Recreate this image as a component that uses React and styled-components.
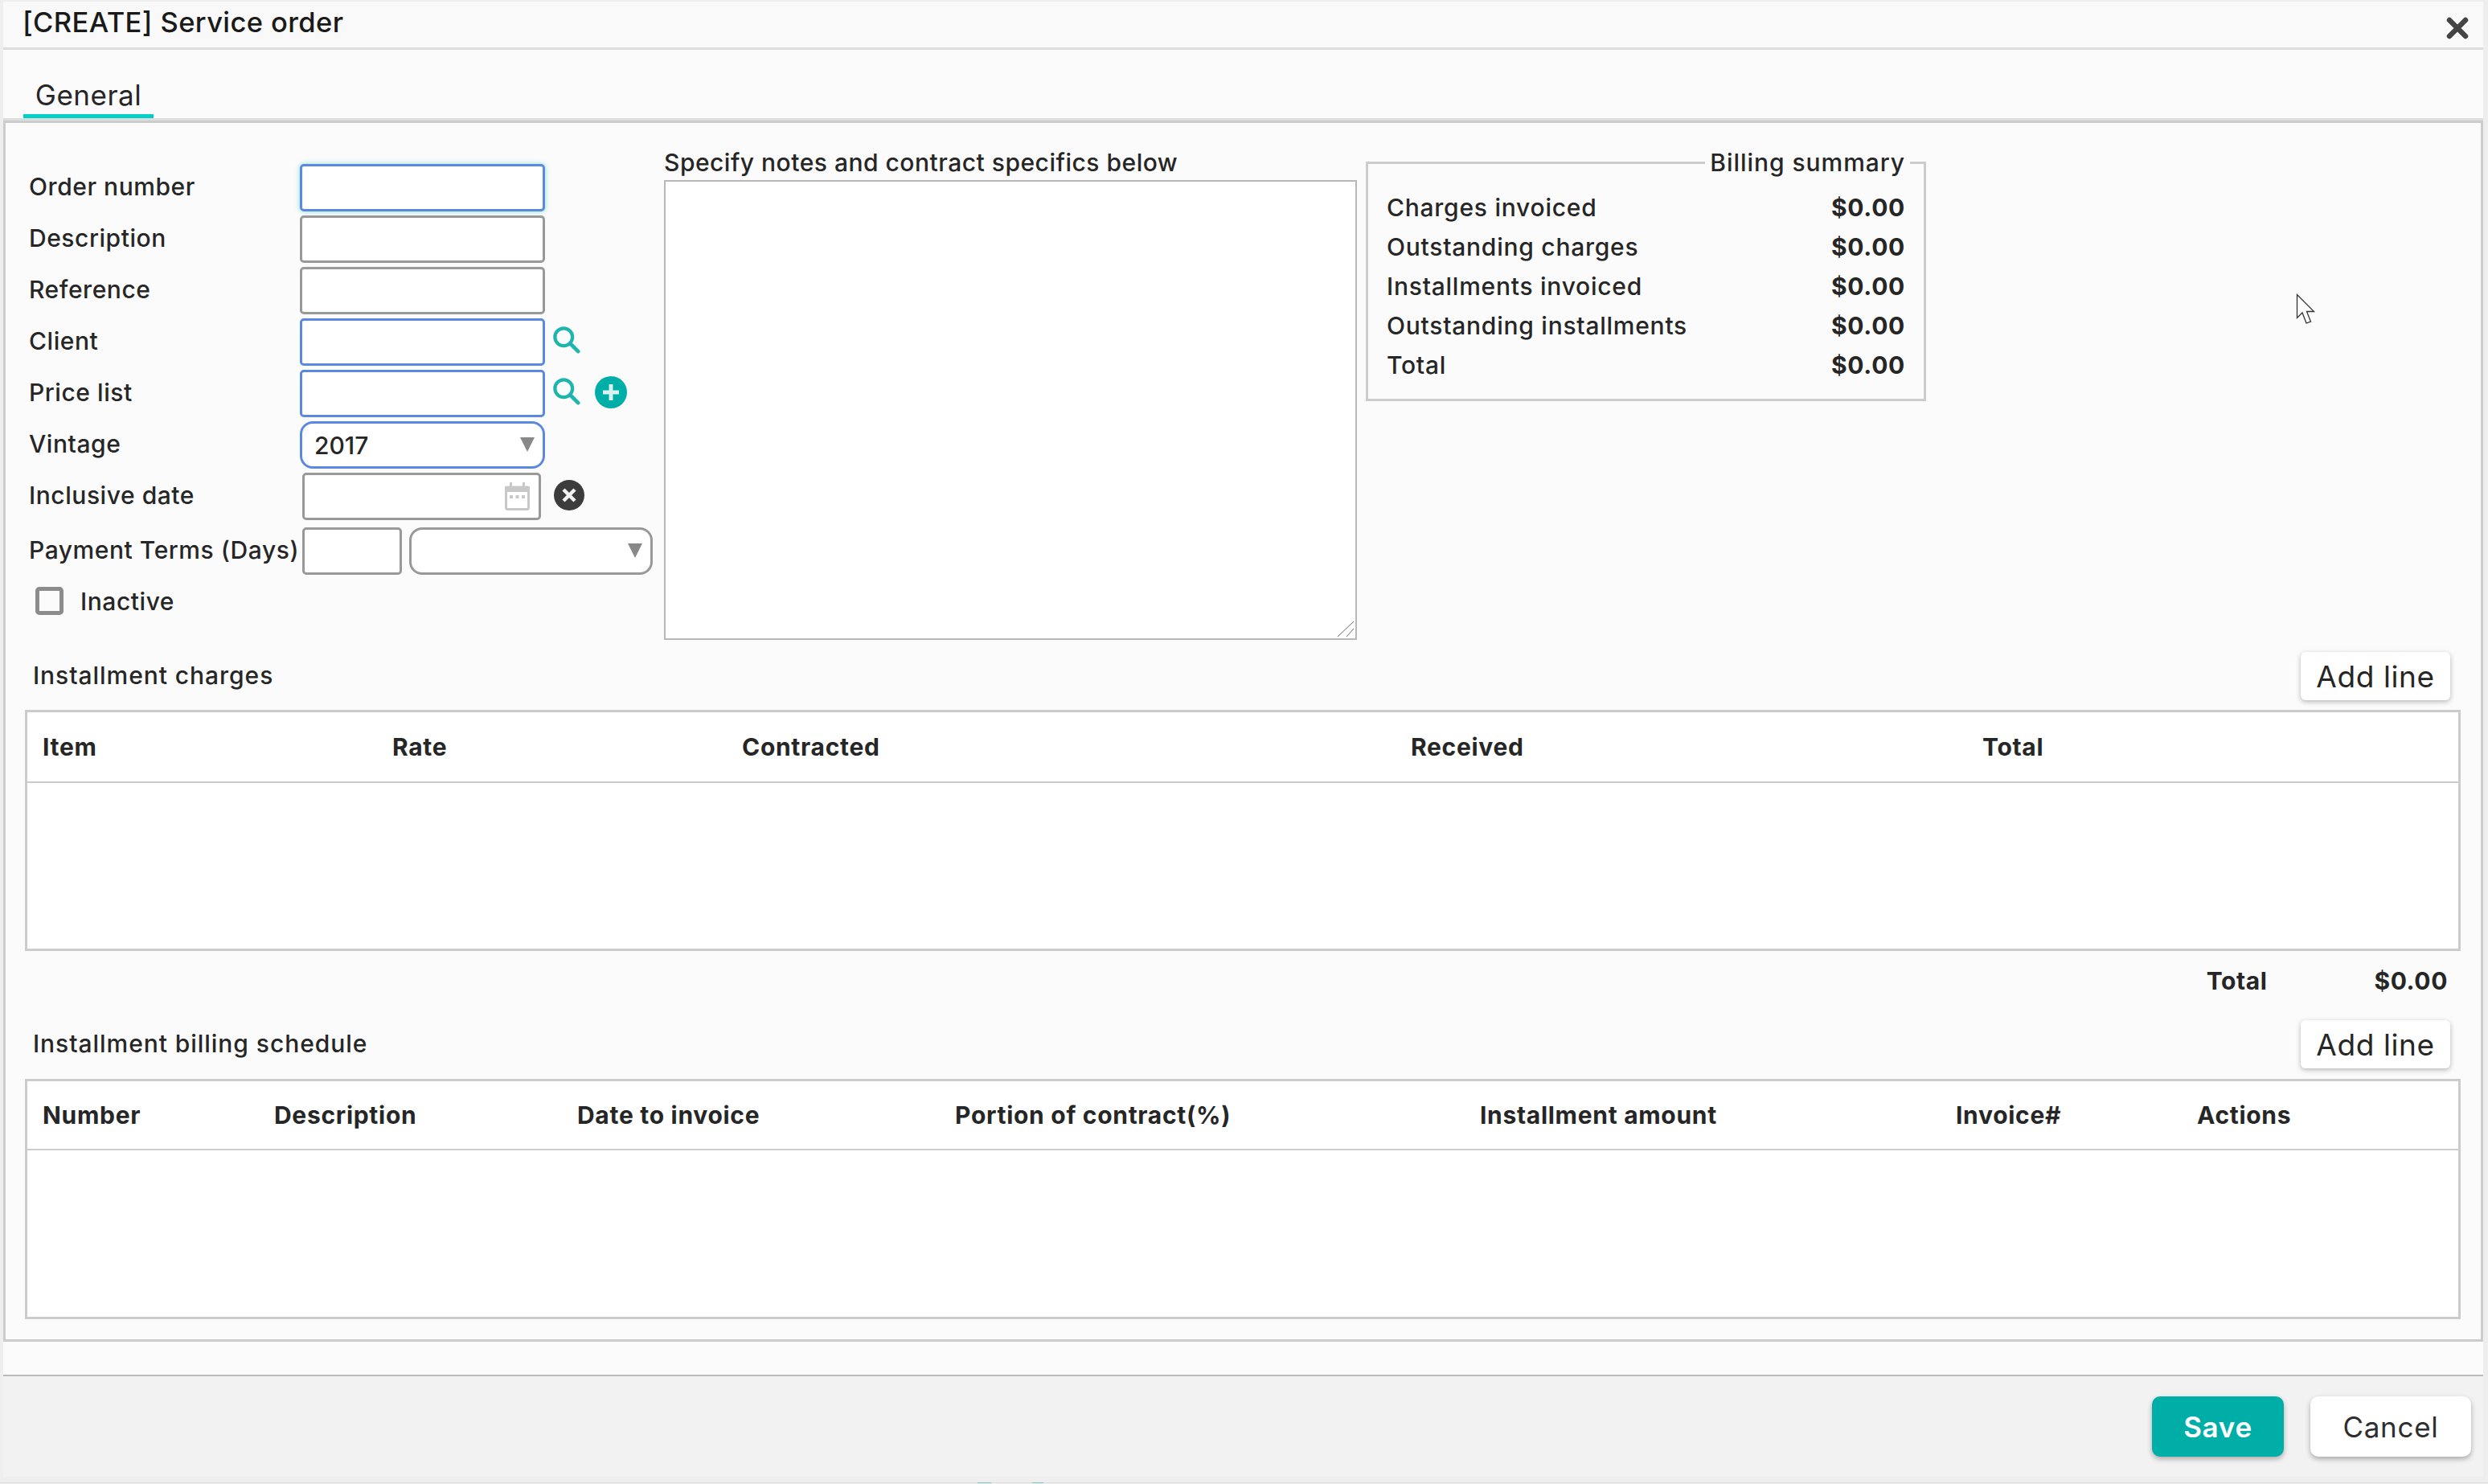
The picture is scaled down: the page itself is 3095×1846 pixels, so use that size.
import styled, { createGlobalStyle } from 'styled-components'

const Global = createGlobalStyle`
html, body {
  margin: 0;
  padding: 0;
  background: #eeeeee;
}
* {
  box-sizing: border-box;
}
body {
  font-family: Inter, "Noto Sans", sans-serif;
  color: #262626;
}
`

const color = {
  teal: '#00aea8',
  tab: '#00d0c8',
  focus: '#5b88e0',
  gray: '#999999',
  line: '#cccccc',
}

const Page = styled.div`
position: relative;
width: 3095px;
height: 1846px;
overflow: hidden;
display: flex;
flex-direction: column;
padding-top: 2px;
background: #eeeeee;
`

const Modal = styled.div`
width: 3085px;
height: 1835px;
margin-left: 4px;
display: flex;
flex-direction: column;
background: #fbfbfb;
`

const Header = styled.div`
height: 60px;
flex: none;
display: flex;
align-items: center;
justify-content: space-between;
padding: 0 18px 6px 24px;
background: #f9f9f9;
border-bottom: 3px solid #dddddd;
`

const Title = styled.div`
font-size: 34.5px;
font-weight: 500;
color: #1a1a1a;
letter-spacing: 0.4px;
`

const CloseButton = styled.span`
display: flex;
margin-top: 14px;
`

const TabStrip = styled.div`
height: 88px;
flex: none;
display: flex;
align-items: flex-end;
padding-left: 25px;
border-bottom: 3px solid #dddddd;
`

const Tab = styled.div`
width: 162px;
height: 52px;
text-align: center;
font-size: 35px;
line-height: 47px;
letter-spacing: 0.5px;
border-bottom: 5px solid ${color.tab};
`

const Panel = styled.div`
height: 1519px;
flex: none;
border: 3px solid ${color.line};
padding-bottom: 25px;
`

const TopRow = styled.div`
height: 643px;
display: flex;
`

const FormColumn = styled.div`
width: 819px;
flex: none;
padding: 51px 0 0 29px;
`

const Field = styled.div`
display: grid;
grid-template-columns: 337px auto;
align-items: center;
height: ${(p) => (p.$tall ? '68px' : '64px')};
align-content: start;
`

const Label = styled.label`
align-self: start;
font-size: 30px;
font-weight: 500;
line-height: 57px;
white-space: nowrap;
letter-spacing: 0.55px;
`

const Controls = styled.div`
display: flex;
align-items: center;
`

const Input = styled.input`
width: ${(p) => p.$width || '305px'};
height: 59px;
margin-left: ${(p) => p.$inset || '0'};
padding: 0 12px;
background: #fff;
border: 3px solid ${(p) => (p.$active ? color.focus : color.gray)};
border-radius: 5px;
outline: none;
font: inherit;
box-shadow: ${(p) => (p.$glow ? '0 0 6px rgba(40, 200, 190, 0.55)' : 'none')};
`

const SelectWrap = styled.div`
position: relative;
width: ${(p) => p.$width || '305px'};
height: 59px;
margin-left: ${(p) => p.$inset || '0'};
&::after {
  content: '';
  position: absolute;
  right: 13px;
  top: 20px;
  border-style: solid;
  border-width: 18px 9px 0 9px;
  border-color: #888888 transparent transparent transparent;
  pointer-events: none;
}
`

const Select = styled.select`
width: 100%;
height: 100%;
appearance: none;
padding: 0 15px;
background: #fff;
border: 3px solid ${(p) => (p.$active ? color.focus : color.gray)};
border-radius: 16px;
outline: none;
font-family: inherit;
font-size: 30px;
font-weight: 500;
color: #262626;
`

const DateWrap = styled.div`
position: relative;
width: 297px;
height: 59px;
margin-left: 3px;
`

const DateInput = styled(Input)`
width: 100%;
margin-left: 0;
`

const CalendarSlot = styled.span`
position: absolute;
right: 14px;
top: 12px;
display: flex;
`

const SearchButton = styled.span`
display: flex;
margin: 0 1px 5px 10px;
`

const RoundButton = styled.span`
display: flex;
margin: 0 0 3px ${(p) => p.$gap};
`

const CheckRow = styled.label`
display: flex;
align-items: center;
gap: 21px;
height: 55px;
padding-left: 8px;
font-size: 30px;
font-weight: 500;
letter-spacing: 0.55px;
`

const Checkbox = styled.input`
appearance: none;
width: 35px;
height: 35px;
margin: 0;
background: #fbfbfb;
border: 5px solid #8c8c8c;
border-radius: 5px;
`

const NotesColumn = styled.div`
width: 862px;
flex: none;
padding-top: 31px;
display: flex;
flex-direction: column;
`

const NotesLabel = styled.label`
font-size: 30px;
font-weight: 500;
line-height: 36px;
height: 40px;
white-space: nowrap;
letter-spacing: 0.5px;
`

const NotesBox = styled.div`
position: relative;
width: 862px;
height: 574px;
`

const Notes = styled.textarea`
display: block;
width: 100%;
height: 100%;
resize: none;
background: #fff;
border: 2px solid #b8b8b8;
outline: none;
`

const ResizeHandle = styled.svg`
position: absolute;
right: 3px;
bottom: 3px;
`

const Summary = styled.fieldset`
width: 697px;
height: 315px;
flex: none;
margin: 31px 0 0 11px;
padding: 13px 23px 0 23px;
border: 3px solid ${color.line};
`

const SummaryTitle = styled.legend`
margin-left: auto;
margin-right: -6px;
padding: 0 6px;
font-size: 30px;
font-weight: 500;
line-height: 36px;
letter-spacing: 0.95px;
`

const SummaryRow = styled.div`
display: flex;
justify-content: space-between;
align-items: center;
height: 49px;
font-size: 30px;
font-weight: 500;
letter-spacing: 0.75px;
`

const Money = styled.span`
font-weight: 700;
letter-spacing: 0.7px;
`

const SectionHead = styled.div`
display: flex;
justify-content: space-between;
align-items: center;
height: 60px;
margin-top: ${(p) => p.$top || '0'};
padding: 0 38px 0 34px;
`

const SectionTitle = styled.span`
margin-bottom: 2px;
font-size: 30px;
font-weight: 500;
letter-spacing: 0.95px;
`

const AddButton = styled.button`
width: 186px;
height: 60px;
padding: 0;
background: #fff;
border: none;
border-radius: 6px;
box-shadow: 0 2px 6px rgba(0, 0, 0, 0.28);
font-family: inherit;
font-size: 37px;
color: #262626;
letter-spacing: 0.6px;
`

const Table = styled.div`
height: ${(p) => p.$height};
margin: ${(p) => p.$top} 25px 0 24px;
background: #fff;
border: 3px solid ${color.line};
`

const TableHead = styled.div`
display: grid;
grid-template-columns: ${(p) => p.$columns};
align-items: center;
height: ${(p) => p.$height};
padding-left: 19px;
border-bottom: 2px solid ${color.line};
font-size: 30px;
font-weight: 700;
letter-spacing: 0.7px;
`

const TotalRow = styled.div`
display: flex;
justify-content: flex-end;
align-items: center;
gap: 133px;
height: 74px;
padding: 0 41px 0 0;
font-size: 30px;
font-weight: 700;
letter-spacing: 0.6px;
`

const Spacer = styled.div`
flex: 1;
`

const Footer = styled.div`
height: 127px;
flex: none;
display: flex;
justify-content: flex-end;
gap: 33px;
padding: 25px 15px 0 0;
background: #f2f2f2;
border-top: 2px solid #bbbbbb;
`

const FooterButton = styled.button`
width: ${(p) => p.$width};
height: 75px;
padding: 0;
border: none;
border-radius: 10px;
background: ${(p) => (p.$primary ? color.teal : '#fff')};
color: ${(p) => (p.$primary ? '#fff' : '#2e2e2e')};
box-shadow: 0 3px 6px rgba(0, 0, 0, 0.3);
font-family: inherit;
font-size: 35px;
font-weight: ${(p) => (p.$primary ? 600 : 400)};
letter-spacing: 0.7px;
`

const PageEdge = styled.div`
height: 1px;
margin-top: 7px;
display: flex;
background: #dddddd;
padding-left: 1216px;
gap: 51px;
`

const EdgeMark = styled.span`
width: ${(p) => p.$width};
background: #7fc4bd;
`

const CursorMark = styled.svg`
position: absolute;
left: 2856px;
top: 365px;
`

function SearchIcon() {
  return (
    <svg width="34" height="34" viewBox="0 0 36 36" fill="none" stroke="#1db5ad" strokeLinecap="round">
      <circle cx="14" cy="14" r="11.5" strokeWidth="4.5" />
      <line x1="23" y1="23" x2="33" y2="33" strokeWidth="5" />
    </svg>
  )
}

function PlusIcon() {
  return (
    <svg width="40" height="40" viewBox="0 0 40 40">
      <circle cx="20" cy="20" r="20" fill={color.teal} />
      <path d="M20 10v20M10 20h20" stroke="#d8f3f1" strokeWidth="5" />
    </svg>
  )
}

function ClearIcon() {
  return (
    <svg width="38" height="38" viewBox="0 0 38 38">
      <circle cx="19" cy="19" r="19" fill="#3c3c3c" />
      <path d="M12 12l14 14M26 12L12 26" stroke="#f2f2f2" strokeWidth="4.5" />
    </svg>
  )
}

function CalendarIcon() {
  return (
    <svg width="31" height="35" viewBox="0 0 31 35">
      <path d="M6 0h3v5h13V0h3v5h6v7H0V5h6z" fill="#c8c8c8" />
      <rect x="1.5" y="6" width="28" height="27.5" rx="2" fill="none" stroke="#c8c8c8" strokeWidth="3" />
      <path d="M6 16h4v4H6zM13.500 16h4v4h-4zM21 16h4v4h-4z" fill="#c8c8c8" />
    </svg>
  )
}

function CloseIcon() {
  return (
    <svg width="28" height="28" viewBox="0 0 28 28">
      <path d="M4 4l20 20M24 4L4 24" stroke="#444444" strokeWidth="6.500" strokeLinecap="round" />
    </svg>
  )
}

const summary = [
  'Charges invoiced',
  'Outstanding charges',
  'Installments invoiced',
  'Outstanding installments',
  'Total',
]

const chargeColumns = ['Item', 'Rate', 'Contracted', 'Received', 'Total']
const scheduleColumns = [
  'Number',
  'Description',
  'Date to invoice',
  'Portion of contract(%)',
  'Installment amount',
  'Invoice#',
  'Actions',
]

function App() {
  return (
    <Page>
      <Global />
      <Modal>
        <Header>
          <Title>[CREATE] Service order</Title>
          <CloseButton><CloseIcon /></CloseButton>
        </Header>
        <TabStrip>
          <Tab>General</Tab>
        </TabStrip>
        <Panel>
          <TopRow>
            <FormColumn>
              <Field>
                <Label>Order number</Label>
                <Controls><Input $active $glow /></Controls>
              </Field>
              <Field>
                <Label>Description</Label>
                <Controls><Input /></Controls>
              </Field>
              <Field>
                <Label>Reference</Label>
                <Controls><Input /></Controls>
              </Field>
              <Field>
                <Label>Client</Label>
                <Controls>
                  <Input $active />
                  <SearchButton><SearchIcon /></SearchButton>
                </Controls>
              </Field>
              <Field>
                <Label>Price list</Label>
                <Controls>
                  <Input $active />
                  <SearchButton><SearchIcon /></SearchButton>
                  <RoundButton $gap="17px"><PlusIcon /></RoundButton>
                </Controls>
              </Field>
              <Field>
                <Label>Vintage</Label>
                <Controls>
                  <SelectWrap>
                    <Select $active defaultValue="2017">
                      <option>2017</option>
                    </Select>
                  </SelectWrap>
                </Controls>
              </Field>
              <Field $tall>
                <Label>Inclusive date</Label>
                <Controls>
                  <DateWrap>
                    <DateInput />
                    <CalendarSlot><CalendarIcon /></CalendarSlot>
                  </DateWrap>
                  <RoundButton $gap="16px"><ClearIcon /></RoundButton>
                </Controls>
              </Field>
              <Field>
                <Label>Payment Terms (Days)</Label>
                <Controls>
                  <Input $width="124px" $inset="3px" />
                  <SelectWrap $width="303px" $inset="9px">
                    <Select />
                  </SelectWrap>
                </Controls>
              </Field>
              <CheckRow>
                <Checkbox type="checkbox" />
                Inactive
              </CheckRow>
            </FormColumn>
            <NotesColumn>
              <NotesLabel>Specify notes and contract specifics below</NotesLabel>
              <NotesBox>
                <Notes />
                <ResizeHandle width="22" height="21" viewBox="0 0 22 21" stroke="#666666" strokeWidth="1">
                  <line x1="21" y1="1" x2="1" y2="20" />
                  <line x1="21" y1="10" x2="12" y2="20" />
                </ResizeHandle>
              </NotesBox>
            </NotesColumn>
            <Summary>
              <SummaryTitle>Billing summary</SummaryTitle>
              {summary.map((name) => (
                <SummaryRow key={name}>
                  <span>{name}</span>
                  <Money>$0.00</Money>
                </SummaryRow>
              ))}
            </Summary>
          </TopRow>

          <SectionHead $top="15px">
            <SectionTitle>Installment charges</SectionTitle>
            <AddButton>Add line</AddButton>
          </SectionHead>
          <Table $top="12px" $height="300px">
            <TableHead $height="88px" $columns="435px 435px 832px 711px 1fr">
              {chargeColumns.map((name) => <span key={name}>{name}</span>)}
            </TableHead>
          </Table>
          <TotalRow>
            <span>Total</span>
            <span>$0.00</span>
          </TotalRow>
          <Spacer />
          <SectionHead $top="12px">
            <SectionTitle>Installment billing schedule</SectionTitle>
            <AddButton>Add line</AddButton>
          </SectionHead>
          <Table $top="13px" $height="299px">
            <TableHead $height="86px" $columns="288px 377px 470px 653px 592px 300px 1fr">
              {scheduleColumns.map((name) => <span key={name}>{name}</span>)}
            </TableHead>
          </Table>
        </Panel>
        <Spacer />
        <Footer>
          <FooterButton $primary $width="164px">Save</FooterButton>
          <FooterButton $width="200px">Cancel</FooterButton>
        </Footer>
      </Modal>
      <PageEdge>
        <EdgeMark $width="17px" />
        <EdgeMark $width="14px" />
      </PageEdge>
      <CursorMark width="26" height="40" viewBox="0 0 26 40">
        <path d="M1.500 1.500v29l6.500-6.500 5 13 5.500-2-5-12.500h9z" fill="#fbfbfb" stroke="#333333" strokeWidth="1.300" />
      </CursorMark>
    </Page>
  )
}

export default App
